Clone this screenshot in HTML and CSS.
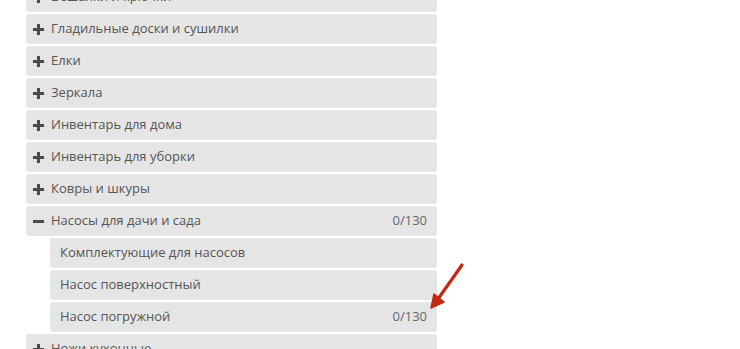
FILE: index.html
```html
<!DOCTYPE html>
<html lang="ru">
<head>
<meta charset="utf-8">
<link rel="stylesheet" href="styles.css">
</head>
<body>
<div class="page">
  <ul class="cats">
    <li class="row"><span class="ico plus"></span><span class="name">Вешалки и крючки</span></li>
    <li class="row"><span class="ico plus"></span><span class="name">Гладильные доски и сушилки</span></li>
    <li class="row"><span class="ico plus"></span><span class="name">Елки</span></li>
    <li class="row"><span class="ico plus"></span><span class="name">Зеркала</span></li>
    <li class="row"><span class="ico plus"></span><span class="name">Инвентарь для дома</span></li>
    <li class="row"><span class="ico plus"></span><span class="name">Инвентарь для уборки</span></li>
    <li class="row"><span class="ico plus"></span><span class="name">Ковры и шкуры</span></li>
    <li class="row"><span class="ico minus"></span><span class="name">Насосы для дачи и сада</span><span class="count">0/130</span></li>
    <li class="row sub"><span class="name">Комплектующие для насосов</span></li>
    <li class="row sub"><span class="name">Насос поверхностный</span></li>
    <li class="row sub"><span class="name">Насос погружной</span><span class="count">0/130</span></li>
    <li class="row"><span class="ico plus"></span><span class="name">Ножи кухонные</span></li>
  </ul>
  <svg class="arrow" width="40" height="50" viewBox="0 0 40 50">
    <path d="M34 3 L10 37" stroke="#c22a10" stroke-width="3.2" stroke-linecap="round" fill="none"/>
    <path d="M3 46 L6 32 L16 40 Z" fill="#c22a10" stroke="#c22a10" stroke-width="1.5" stroke-linejoin="round"/>
  </svg>
</div>
</body>
</html>
```
FILE: styles.css
```css
html, body {
  margin: 0;
  padding: 0;
  background: #ffffff;
  overflow: hidden;
}
body {
  font-family: "Open Sans", "Liberation Sans", sans-serif;
  font-size: 13px;
  color: #555555;
}
.page {
  position: relative;
  width: 740px;
  height: 349px;
  overflow: hidden;
}
.cats {
  list-style: none;
  margin: -18px 0 0 26px;
  padding: 0;
  width: 411px;
  display: flex;
  flex-direction: column;
  gap: 2px;
}
.row {
  height: 30px;
  background: #e5e5e6;
  border-radius: 3px;
  display: flex;
  align-items: center;
  padding: 0 10px 2px 7px;
  box-sizing: border-box;
}
.row.sub {
  margin-left: 24px;
  padding-left: 10px;
}
.ico {
  width: 11px;
  height: 11px;
  position: relative;
  margin-right: 7px;
  margin-top: 2px;
  flex: none;
}
.ico::before, .ico::after {
  content: "";
  position: absolute;
  background: #4a4a4a;
}
.ico::before {
  left: 0;
  right: 0;
  top: 4px;
  height: 3px;
}
.plus::after {
  top: 0;
  bottom: 0;
  left: 4px;
  width: 3px;
}
.minus::after {
  display: none;
}
.name {
  flex: 1;
  white-space: nowrap;
}
.count {
  color: #666666;
}
.arrow {
  position: absolute;
  left: 428px;
  top: 262px;
}
```
